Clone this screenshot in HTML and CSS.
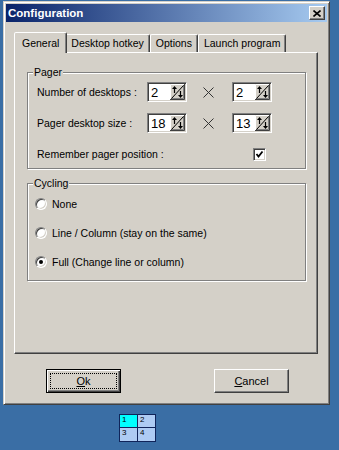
FILE: index.html
```html
<!DOCTYPE html>
<html lang="en">
<head>
    <meta charset="UTF-8" />
    <title>Configuration</title>
    <link rel="stylesheet" href="styles.css">
</head>
<body>
    <!-- Dialog window -->
    <div class="window">
        <div class="titlebar">
            <span class="title">Configuration</span>
            <span class="close">
                <svg width="8" height="7" viewBox="0 0 8 7"><path d="M0.5 0.5L7.5 6.5M7.5 0.5L0.5 6.5" stroke="#000" stroke-width="1.6" fill="none"/></svg>
            </span>
        </div>

        <div class="window-body">
            <div class="tabs">
                <div class="tab tab-active">General</div>
                <div class="tab">Desktop hotkey</div>
                <div class="tab">Options</div>
                <div class="tab">Launch program</div>
            </div>

            <div class="panel">
                <!-- Pager group -->
                <fieldset class="group group-pager">
                    <legend>Pager</legend>
                    <div class="pager-grid">
                        <span class="field-label">Number of desktops :</span>
                        <span class="spin"><span class="spin-value">2</span><svg class="spin-btn" width="15" height="16" viewBox="0 0 15 16"><rect width="15" height="16" fill="#d4d0c8"/><path d="M0.5 16V0.5H15" stroke="#fff" fill="none"/><path d="M0 15.5H14.5V0" stroke="#404040" fill="none"/><path d="M1 14.5H13.5V1" stroke="#808080" fill="none"/><path d="M1.5 14.5L13.5 1.5" stroke="#000" fill="none"/><path d="M4.5 4v5" stroke="#000" stroke-width="1.2"/><path d="M2 5L4.5 2L7 5z" fill="#000"/><path d="M10.5 7v5" stroke="#000" stroke-width="1.2"/><path d="M8 11H13L10.5 14z" fill="#000"/></svg></span>
                        <svg class="times" width="11" height="11" viewBox="0 0 11 11"><path d="M0.5 0.5L10.5 10.5M10.5 0.5L0.5 10.5" stroke="#333" fill="none"/></svg>
                        <span class="spin"><span class="spin-value">2</span><svg class="spin-btn" width="15" height="16" viewBox="0 0 15 16"><rect width="15" height="16" fill="#d4d0c8"/><path d="M0.5 16V0.5H15" stroke="#fff" fill="none"/><path d="M0 15.5H14.5V0" stroke="#404040" fill="none"/><path d="M1 14.5H13.5V1" stroke="#808080" fill="none"/><path d="M1.5 14.5L13.5 1.5" stroke="#000" fill="none"/><path d="M4.5 4v5" stroke="#000" stroke-width="1.2"/><path d="M2 5L4.5 2L7 5z" fill="#000"/><path d="M10.5 7v5" stroke="#000" stroke-width="1.2"/><path d="M8 11H13L10.5 14z" fill="#000"/></svg></span>

                        <span class="field-label">Pager desktop size :</span>
                        <span class="spin"><span class="spin-value">18</span><svg class="spin-btn" width="15" height="16" viewBox="0 0 15 16"><rect width="15" height="16" fill="#d4d0c8"/><path d="M0.5 16V0.5H15" stroke="#fff" fill="none"/><path d="M0 15.5H14.5V0" stroke="#404040" fill="none"/><path d="M1 14.5H13.5V1" stroke="#808080" fill="none"/><path d="M1.5 14.5L13.5 1.5" stroke="#000" fill="none"/><path d="M4.5 4v5" stroke="#000" stroke-width="1.2"/><path d="M2 5L4.5 2L7 5z" fill="#000"/><path d="M10.5 7v5" stroke="#000" stroke-width="1.2"/><path d="M8 11H13L10.5 14z" fill="#000"/></svg></span>
                        <svg class="times" width="11" height="11" viewBox="0 0 11 11"><path d="M0.5 0.5L10.5 10.5M10.5 0.5L0.5 10.5" stroke="#333" fill="none"/></svg>
                        <span class="spin"><span class="spin-value">13</span><svg class="spin-btn" width="15" height="16" viewBox="0 0 15 16"><rect width="15" height="16" fill="#d4d0c8"/><path d="M0.5 16V0.5H15" stroke="#fff" fill="none"/><path d="M0 15.5H14.5V0" stroke="#404040" fill="none"/><path d="M1 14.5H13.5V1" stroke="#808080" fill="none"/><path d="M1.5 14.5L13.5 1.5" stroke="#000" fill="none"/><path d="M4.5 4v5" stroke="#000" stroke-width="1.2"/><path d="M2 5L4.5 2L7 5z" fill="#000"/><path d="M10.5 7v5" stroke="#000" stroke-width="1.2"/><path d="M8 11H13L10.5 14z" fill="#000"/></svg></span>

                        <span class="field-label field-label-wide">Remember pager position :</span>
                        <span class="checkbox">
                            <svg width="9" height="9" viewBox="0 0 9 9"><path d="M1.5 4L3.5 6.5L7.5 1.5" stroke="#000" stroke-width="1.8" fill="none"/></svg>
                        </span>
                    </div>
                </fieldset>

                <!-- Cycling group -->
                <fieldset class="group group-cycling">
                    <legend>Cycling</legend>
                    <div class="radio-row"><span class="radio"></span>None</div>
                    <div class="radio-row"><span class="radio"></span>Line / Column (stay on the same)</div>
                    <div class="radio-row"><span class="radio radio-checked"></span>Full (Change line or column)</div>
                </fieldset>
            </div>

            <div class="buttons">
                <div class="btn btn-default"><span class="focus-rect"><u>O</u>k</span></div>
                <div class="btn btn-cancel"><u>C</u>ancel</div>
            </div>
        </div>
    </div>

    <!-- Desktop pager -->
    <div class="minipager">
        <span class="mini-cell mini-cell-active">1</span>
        <span class="mini-cell">2</span>
        <span class="mini-cell">3</span>
        <span class="mini-cell">4</span>
    </div>
</body>
</html>
```

FILE: styles.css
```css
/* Global */
*,
*::before,
*::after {
    box-sizing: border-box;
}

body {
    margin: 0;
    background: #3a6ea5;
    font-family: 'Liberation Sans', Arial, sans-serif;
    font-size: 10.5px;
    color: #000;
}

/* Window frame */
.window {
    width: 327px;
    height: 404px;
    margin: 1px 0 0 3px;
    padding: 2px;
    background: #d4d0c8;
    border: 1px solid;
    border-color: #d4d0c8 #404040 #404040 #d4d0c8;
    box-shadow: inset 1px 1px 0 #fff, inset -1px -1px 0 #808080;
}

.titlebar {
    display: flex;
    align-items: center;
    justify-content: space-between;
    height: 18px;
    padding: 0 2px 0 2px;
    background: linear-gradient(to right, #0a246a, #a6caf0);
}

.title {
    color: #fff;
    font-weight: bold;
    font-size: 11.5px;
}

.close {
    display: flex;
    align-items: center;
    justify-content: center;
    width: 16px;
    height: 14px;
    background: #d4d0c8;
    border: 1px solid;
    border-color: #fff #404040 #404040 #fff;
    box-shadow: inset -1px -1px 0 #808080;
}

.window-body {
    padding: 10px 9px 0 8px;
}

/* Tabs */
.tabs {
    display: flex;
    align-items: flex-end;
    height: 20px;
    padding-left: 2px;
}

.tab {
    height: 18px;
    padding: 0 5px;
    line-height: 17px;
    border: 1px solid;
    border-bottom: none;
    border-color: #fff #404040 transparent #fff;
    border-radius: 2px 2px 0 0;
    box-shadow: inset -1px 0 0 #808080;
    white-space: nowrap;
}

.tab-active {
    position: relative;
    z-index: 1;
    height: 21px;
    margin: 0 -2px -1px -2px;
    padding: 0 7px;
    line-height: 20px;
    background: #d4d0c8;
}

.panel {
    height: 302px;
    padding: 13px 11px 0 12px;
    border: 1px solid;
    border-color: #fff #404040 #404040 #fff;
    box-shadow: inset -1px -1px 0 #808080;
}

/* Group boxes */
.group {
    margin: 0;
    min-width: 0;
    border: 1px solid #808080;
    box-shadow: 1px 1px 0 #fff, inset 1px 1px 0 #fff;
}

.group legend {
    padding: 0 1px;
    line-height: 13px;
    background: #d4d0c8;
}

.group-pager {
    padding: 3px 0 4px 9px;
}

.group-pager legend {
    margin-left: -4px;
}

.group-cycling {
    margin-top: 8px;
    padding: 6px 0 10px 7px;
}

.group-cycling legend {
    margin-left: -2px;
}

.pager-grid {
    display: grid;
    grid-template-columns: 110px 40px 45px 40px;
    grid-auto-rows: 20px;
    row-gap: 11px;
    align-items: center;
}

.field-label {
    white-space: nowrap;
}

.field-label-wide {
    grid-column: 1 / 4;
}

.times {
    justify-self: center;
    margin-right: 3px;
}

/* Spin boxes */
.spin {
    display: flex;
    width: 40px;
    height: 20px;
    padding: 1px;
    background: #fff;
    border: 1px solid;
    border-color: #808080 #fff #fff #808080;
    box-shadow: inset 1px 1px 0 #404040, inset -1px -1px 0 #d4d0c8;
}

.spin-value {
    flex: 1;
    padding-left: 2px;
    font-size: 13px;
    line-height: 17px;
}

.spin-btn {
    display: block;
}

/* Checkbox */
.checkbox {
    grid-column: 4;
    justify-self: end;
    display: flex;
    align-items: center;
    justify-content: center;
    width: 13px;
    height: 13px;
    margin-right: 6px;
    background: #fff;
    border: 1px solid;
    border-color: #808080 #fff #fff #808080;
    box-shadow: inset 1px 1px 0 #404040, inset -1px -1px 0 #d4d0c8;
}

/* Radio buttons */
.radio-row {
    display: flex;
    align-items: center;
    gap: 5px;
    height: 16px;
    margin-bottom: 13px;
    white-space: nowrap;
}

.radio-row:last-child {
    margin-bottom: 0;
}

.radio {
    display: flex;
    align-items: center;
    justify-content: center;
    width: 12px;
    height: 12px;
    border-radius: 50%;
    background: #fff;
    border: 1px solid;
    border-color: #808080 #fff #fff #808080;
    box-shadow: inset 1px 1px 0 #404040, inset -1px -1px 0 #d4d0c8;
}

.radio-checked::after {
    content: "";
    width: 4px;
    height: 4px;
    border-radius: 50%;
    background: #000;
}

/* Buttons */
.buttons {
    display: flex;
    margin-top: 15px;
    padding-left: 32px;
}

.btn {
    display: flex;
    align-items: center;
    justify-content: center;
    width: 75px;
    height: 24px;
    font-size: 11px;
    background: #d4d0c8;
}

.btn-default {
    padding: 3px;
    border: 1px solid #000;
    box-shadow: inset 1px 1px 0 #fff, inset -1px -1px 0 #404040, inset -2px -2px 0 #808080;
}

.focus-rect {
    display: flex;
    align-items: center;
    justify-content: center;
    width: 100%;
    height: 100%;
    border: 1px dotted #000;
}

.btn-cancel {
    margin-left: 93px;
    border: 1px solid;
    border-color: #fff #404040 #404040 #fff;
    box-shadow: inset -1px -1px 0 #808080;
}

/* Desktop mini pager */
.minipager {
    display: grid;
    grid-template-columns: 17px 17px;
    grid-template-rows: 12px 13px;
    gap: 1px;
    width: 37px;
    margin: 9px 0 0 119px;
    background: #10245a;
    border: 1px solid #10245a;
}

.mini-cell {
    padding-left: 2px;
    font-size: 8px;
    line-height: 10px;
    background: #aecbf3;
}

.mini-cell-active {
    background: #00ffff;
}
```
